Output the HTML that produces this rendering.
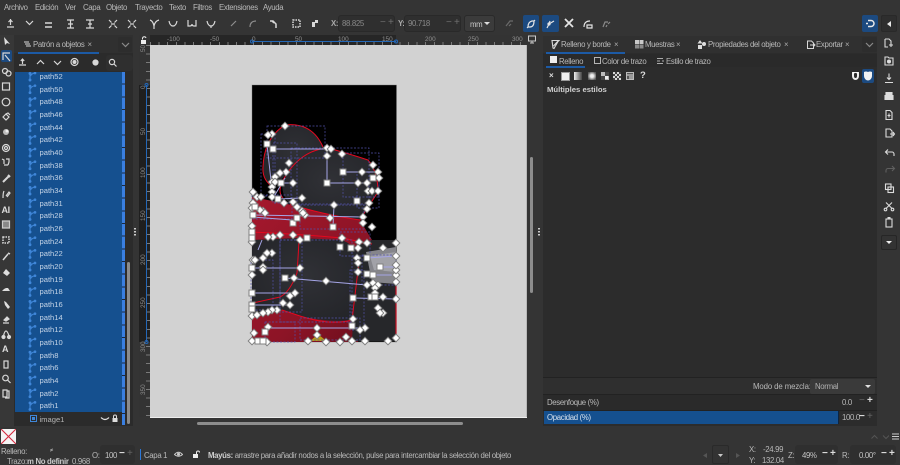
<!DOCTYPE html>
<html lang="es"><head><meta charset="utf-8"><title>Inkscape</title>
<style>
html,body{margin:0;padding:0;background:#343434}
#r{position:relative;width:900px;height:465px;overflow:hidden;background:#343434;font-family:"Liberation Sans",sans-serif;font-size:7.8px;letter-spacing:-.33px;color:#b9b9b9}
#r div,#r span,#r svg{position:absolute}
.t{white-space:nowrap;line-height:9px}
.b{font-weight:bold}
.row{left:39.5px;color:#c3d3e6;font-size:7.6px;letter-spacing:0;white-space:nowrap;line-height:9px}
.lb{color:#8f8f8f;font-size:6.4px;letter-spacing:0;white-space:nowrap;line-height:7px}
.v{transform:rotate(-90deg);transform-origin:0 0}
svg.i{overflow:visible;fill:none;stroke:#d8d8d8;stroke-width:1.2}
</style></head><body><div id="r">

<!-- menu -->
<span class="t" style="left:4px;top:3px">Archivo</span>
<span class="t" style="left:35px;top:3px">Edición</span>
<span class="t" style="left:65px;top:3px">Ver</span>
<span class="t" style="left:83px;top:3px">Capa</span>
<span class="t" style="left:106px;top:3px">Objeto</span>
<span class="t" style="left:135px;top:3px">Trayecto</span>
<span class="t" style="left:169px;top:3px">Texto</span>
<span class="t" style="left:193px;top:3px">Filtros</span>
<span class="t" style="left:219px;top:3px">Extensiones</span>
<span class="t" style="left:263px;top:3px">Ayuda</span>

<!-- toolbar icons -->
<svg class="i" style="left:0;top:14px" width="320" height="20" viewBox="0 0 320 20">
<path d="M7 13h7M10.500 5v6M8.500 8l2-2 2 2"/>
<path d="M26 7l3.500 3.500L33 7"/>
<path d="M45 9h7M45 13h7" stroke-width="1.500"/>
<path d="M67 6h7M70.500 6v8M67 14h7M68 10h5"/>
<path d="M86 6h8M90 6v8M86 14h8M88 10h4"/>
<path d="M109 6l2.500 2.500M117 6l-2.500 2.500M109 14l2.500-2.500M117 14l-2.500-2.500M111 10h4"/>
<path d="M128 6l2.500 2.500M136 6l-2.500 2.500M128 14l2.500-2.500M136 14l-2.500-2.500M130 10h4"/>
<path d="M150 6q3 1 4 6 1-5 5-6M154 12v3"/>
<path d="M169 7q1 5 4 5t4-5"/>
<path d="M188 6v6h2q2 0 2-2 0 2 2 2h2V6"/>
<path d="M207 7q1 5 4 5t4-5M211 12v2"/>
<path d="M231 12l5-5" stroke="#8d8d8d"/>
<path d="M250 13q0-6 6-6" stroke="#8d8d8d"/>
<path d="M270 7h3l3 3v4M272 7l2 2" stroke-width="1.500"/>
<path d="M293 6h7v7h-7z" stroke-dasharray="1.500 1" stroke-width="1.500"/>
<path d="M312 8h3v5h-3zM315 6h3v3h-3z" fill="#d8d8d8" stroke="none"/>
</svg>
<span class="t" style="left:331px;top:19px;font-weight:bold;color:#aaa">X:</span>
<div style="left:338px;top:15px;width:57px;height:17px;background:#2f2f2f;border:1px solid #292929;border-radius:3px;box-sizing:border-box"></div>
<span class="t" style="left:342px;top:19px;color:#8a8a8a">88.825</span>
<span class="t" style="left:380px;top:18px;color:#6f6f6f;font-size:10px">−</span><span class="t" style="left:388px;top:18px;color:#6f6f6f;font-size:10px">+</span>
<span class="t" style="left:398px;top:19px;font-weight:bold;color:#aaa">Y:</span>
<div style="left:404px;top:15px;width:57px;height:17px;background:#2f2f2f;border:1px solid #292929;border-radius:3px;box-sizing:border-box"></div>
<span class="t" style="left:408px;top:19px;color:#8a8a8a">90.718</span>
<span class="t" style="left:446px;top:18px;color:#6f6f6f;font-size:10px">−</span><span class="t" style="left:454px;top:18px;color:#6f6f6f;font-size:10px">+</span>
<div style="left:464px;top:15px;width:31px;height:17px;background:#3b3b3b;border:1px solid #2a2a2a;border-radius:3px;box-sizing:border-box"></div>
<span class="t" style="left:470px;top:20px;color:#c8c8c8">mm</span>
<svg style="left:484px;top:22px" width="6" height="4"><path d="M0 0h6L3 3z" fill="#ddd"/></svg>
<svg class="i" style="left:500px;top:14px;stroke:#6a6a6a" width="400" height="20">
<path d="M6 12l4-5h3M9 12l2-2"/>
</svg>
<div style="left:523px;top:15px;width:16px;height:17px;background:#1c4a80;border-radius:2px"></div>
<div style="left:542px;top:15px;width:17px;height:17px;background:#1c4a80;border-radius:2px"></div>
<svg class="i" style="left:500px;top:14px;stroke:#e4e4e4" width="400" height="20">
<path d="M28 13q0-5 4-6h2q0 6-4 6zM27 14l1-1M35 6l-1 1" />
<path d="M47 14l2-4 1-3M49 10l5-3" />
<circle cx="49" cy="10" r="1" fill="#e4e4e4"/>
<path d="M65 5l8 8M73 5l-8 8" stroke-width="1.800"/>
<path d="M84 13q0-6 6-6M87 11h5v3h-5z"/>
<path d="M103 13l2-5h3M106 13l1-2M108 10l2-2" stroke="#8a8a8a"/>
</svg>
<div style="left:862px;top:15px;width:16px;height:17px;background:#1c4a80;border-radius:2px"></div>
<svg class="i" style="left:862px;top:15px;stroke:#e8e8e8;stroke-width:1.500" width="16" height="17"><path d="M6 5.500h3a3 3 0 0 1 0 6H6M4 8.500h2"/></svg>
<div style="left:881px;top:15px;width:16px;height:17px;background:#2e2e2e;border:1px solid #292929;border-radius:2px;box-sizing:border-box"></div>
<svg style="left:887px;top:21px" width="4" height="6"><path d="M4 0v6L0 3z" fill="#e8e8e8"/></svg>

<!-- left tools -->
<div style="left:0;top:35px;width:14px;height:392px;background:#373737"></div>
<div style="left:1px;top:50px;width:11px;height:12px;background:#1c4a80;border-radius:2px"></div>
<svg class="i" style="left:0;top:35px" width="14" height="392" viewBox="0 0 14 392">
<path d="M4 2l1 8 2-2 3 1z" fill="#ddd" stroke="none"/>
<path d="M3 25v-7h7M5 20l5 6" />
<circle cx="5" cy="36" r="2.500"/><circle cx="8.500" cy="38.500" r="2.500"/>
<rect x="2.500" y="48" width="7" height="7"/>
<circle cx="6" cy="67" r="3.800"/>
<path d="M3 82l3-3 3 3-3 3zM6 79l2-1 2 2" />
<circle cx="6" cy="97" r="3" fill="#bbb" stroke="none"/><circle cx="7" cy="96" r="1.500" fill="#eee" stroke="none"/>
<circle cx="6" cy="113" r="3.500"/><circle cx="6" cy="113" r="1.500"/>
<path d="M2 124l2 1v4M4 130l4 0M6 124h3v3l-1 3" />
<path d="M3 147l6-6M8 140l2 2" stroke-width="2"/>
<path d="M3 163q0-5 1-7M6 161l3-4 1 1-3 4" />
<text x="1.500" y="178" font-size="9" font-weight="bold" fill="#dcdcdc" stroke="none" font-family="Liberation Sans">AI</text>
<path d="M2.500 186h7v7h-7z" fill="#888" stroke="#ccc"/>
<path d="M3 202h6v6H3z" stroke-dasharray="1.500 1" stroke-width="1.500"/>
<path d="M3 225l5-6M8 218l2 1" stroke-width="1.500"/>
<path d="M3 238l3-4 4 4-3 3z" fill="#ddd" stroke="none"/>
<path d="M2 256h8l-2-3h-2l-2 1z" fill="#ddd" stroke="none"/>
<path d="M4 266l2 1 4 5-2 2-3-4z" fill="#ddd" stroke="none"/>
<path d="M3 288h6M4 285l3-3 2 2-3 2z" fill="#ddd"/>
<circle cx="3.500" cy="302" r="1.500" fill="#ddd"/><circle cx="9" cy="302" r="1.500" fill="#ddd"/><path d="M3.500 301q1-5 2.500-5t3 5"/>
<text x="2" y="317" font-size="9" font-weight="bold" fill="#dcdcdc" stroke="none" font-family="Liberation Sans">A</text>
<rect x="4" y="326" width="4" height="7" />
<circle cx="5.500" cy="343" r="2.800"/><path d="M7.500 345l3 3"/>
<path d="M3 355h4v7H3zM7 356h2v7H5" />
</svg>

<!-- layers panel -->
<div style="left:14px;top:35px;width:119px;height:391px;background:#2b2b2b"></div>
<div style="left:14px;top:35px;width:119px;height:18px;background:#303030"></div>
<div style="left:18px;top:52px;width:81px;height:1.500px;background:#1c5aa5"></div>
<svg class="i" style="left:23px;top:40px;stroke-width:1" width="10" height="9"><path d="M1 2h5M2 4h5M3 6h5"/></svg>
<span class="t" style="left:33px;top:40px">Patrón a objetos</span>
<span class="t" style="left:87.500px;top:40px;color:#aaa">×</span>
<div style="left:118px;top:37px;width:14px;height:15px;background:#2d2d2d;border-radius:2px"></div>
<svg class="i" style="left:121px;top:42px;stroke:#8a8a8a" width="9" height="6"><path d="M1 1l3.500 3.500L8 1"/></svg>
<svg class="i" style="left:14px;top:54px;stroke:#d8d8d8" width="119" height="18" viewBox="0 0 119 18">
<path d="M5 11h7M8.500 5v5M6.800 7l1.700-2 1.700 2"/>
<path d="M23 10l3.500-3.500L30 10"/>
<path d="M40 7l3.500 3.500L47 7"/>
<circle cx="60.500" cy="8" r="3.500"/><circle cx="60.500" cy="8" r="1.400" fill="#d8d8d8"/>
<circle cx="81.500" cy="8.500" r="2.500" fill="#d8d8d8"/>
</svg>
<div style="left:106px;top:55px;width:27px;height:16px;background:#2f2f2f;border-radius:3px"></div>
<svg class="i" style="left:108px;top:58px" width="10" height="10"><circle cx="4" cy="4" r="2.600"/><path d="M6 6l2.500 2.500"/></svg>

<div style="left:15px;top:72px;width:106.500px;height:340px;background:#15508f"></div>
<div style="left:122px;top:72px;width:2.500px;height:353px;background:repeating-linear-gradient(#3a7fe0 0 11.670px,#1b2a3f 11.670px 12.670px)"></div>
<div style="left:127px;top:262px;width:3px;height:162px;background:#8b8b8b;border-radius:2px"></div>

<svg width="12" height="345" viewBox="0 0 12 345" style="left:28px;top:72px;stroke:#3f86d8;fill:none;stroke-width:1.100">
<defs><g id="pi"><path d="M2 1.500v6M2.500 4q1.200-2.500 4-2.800"/><circle cx="2" cy="1.500" r=".9" fill="#3f86d8"/><circle cx="7" cy="1" r=".8" fill="#3f86d8"/><circle cx="2" cy="8" r=".9" fill="#3f86d8"/></g></defs>
<use href="#pi" y="0"/><use href="#pi" y="12.670"/><use href="#pi" y="25.340"/><use href="#pi" y="38"/><use href="#pi" y="50.700"/><use href="#pi" y="63.400"/><use href="#pi" y="76"/><use href="#pi" y="88.700"/><use href="#pi" y="101.400"/><use href="#pi" y="114"/><use href="#pi" y="126.700"/><use href="#pi" y="139.400"/><use href="#pi" y="152"/><use href="#pi" y="164.700"/><use href="#pi" y="177.400"/><use href="#pi" y="190"/><use href="#pi" y="202.700"/><use href="#pi" y="215.400"/><use href="#pi" y="228"/><use href="#pi" y="240.700"/><use href="#pi" y="253.400"/><use href="#pi" y="266"/><use href="#pi" y="278.700"/><use href="#pi" y="291.400"/><use href="#pi" y="304"/><use href="#pi" y="316.700"/><use href="#pi" y="329.400"/>
</svg>

<span class="row" style="top:72px">path52</span>
<span class="row" style="top:84.700px">path50</span>
<span class="row" style="top:97.300px">path48</span>
<span class="row" style="top:110px">path46</span>
<span class="row" style="top:122.700px">path44</span>
<span class="row" style="top:135.400px">path42</span>
<span class="row" style="top:148px">path40</span>
<span class="row" style="top:160.700px">path38</span>
<span class="row" style="top:173.400px">path36</span>
<span class="row" style="top:186px">path34</span>
<span class="row" style="top:198.700px">path31</span>
<span class="row" style="top:211.400px">path28</span>
<span class="row" style="top:224px">path26</span>
<span class="row" style="top:236.700px">path24</span>
<span class="row" style="top:249.400px">path22</span>
<span class="row" style="top:262px">path20</span>
<span class="row" style="top:274.700px">path19</span>
<span class="row" style="top:287.400px">path18</span>
<span class="row" style="top:300px">path16</span>
<span class="row" style="top:312.700px">path14</span>
<span class="row" style="top:325.400px">path12</span>
<span class="row" style="top:338px">path10</span>
<span class="row" style="top:350.700px">path8</span>
<span class="row" style="top:363.400px">path6</span>
<span class="row" style="top:376px">path4</span>
<span class="row" style="top:388.700px">path2</span>
<span class="row" style="top:401.400px">path1</span>
<svg style="left:29.500px;top:415px" width="7" height="7"><rect x=".5" y=".5" width="6" height="6" fill="none" stroke="#3f86d8"/><rect x="2" y="2" width="3" height="3" fill="#3f86d8"/></svg>
<span class="row" style="top:414.500px;color:#b5b5b5">image1</span>
<svg class="i" style="left:100px;top:416px;stroke:#ddd" width="10" height="6"><path d="M1 1.500q4 4 8 0"/></svg>
<svg style="left:112px;top:414px" width="6" height="9"><path d="M1.500 4V2.500a1.500 1.500 0 0 1 3 0V4" fill="none" stroke="#ddd"/><rect x="0.500" y="4" width="5" height="4" fill="#ddd"/></svg>

<!-- handle dots -->
<svg style="left:134px;top:228px" width="3" height="8"><g fill="#ccc"><rect y="0" width="2" height="1.500"/><rect y="3" width="2" height="1.500"/><rect y="6" width="2" height="1.500"/></g></svg>
<svg style="left:538px;top:228px" width="3" height="8"><g fill="#ccc"><rect y="0" width="2" height="1.500"/><rect y="3" width="2" height="1.500"/><rect y="6" width="2" height="1.500"/></g></svg>

<!-- rulers -->
<div style="left:139px;top:35px;width:390px;height:10px;background:#333"></div>
<div style="left:150px;top:35px;width:246px;height:10px;background:#262626"></div>
<div style="left:150px;top:41.500px;width:376px;height:3.500px;background:repeating-linear-gradient(90deg,#7a7a7a 0 1px,transparent 1px 8.600px)"></div>
<div style="left:139px;top:45px;width:11px;height:372px;background:#333"></div>
<div style="left:139px;top:85px;width:11px;height:257px;background:#1f1f1f"></div>
<div style="left:146px;top:45px;width:4px;height:372px;background:repeating-linear-gradient(#7a7a7a 0 1px,transparent 1px 8.600px)"></div>
<div style="left:252px;top:41px;width:144px;height:1.200px;background:#2468b8"></div>
<div style="left:145.500px;top:85px;width:1.200px;height:257px;background:#2468b8"></div>
<svg style="left:250px;top:39px" width="149" height="6"><circle cx="2" cy="2.500" r="1.500" fill="none" stroke="#2468b8"/><circle cx="146" cy="2.500" r="1.500" fill="none" stroke="#2468b8"/></svg>
<svg style="left:143.500px;top:83px" width="5" height="262"><circle cx="2.500" cy="2" r="1.500" fill="none" stroke="#2468b8"/><circle cx="2.500" cy="259" r="1.500" fill="none" stroke="#2468b8"/></svg>
<span class="lb" style="left:167px;top:36px">-100</span>
<span class="lb" style="left:210px;top:36px">-50</span>
<span class="lb" style="left:252px;top:36px">0</span>
<span class="lb" style="left:295px;top:36px">50</span>
<span class="lb" style="left:338px;top:36px">100</span>
<span class="lb" style="left:382px;top:36px">150</span>
<span class="lb" style="left:425px;top:36px">200</span>
<span class="lb" style="left:468px;top:36px">250</span>
<span class="lb" style="left:512px;top:36px">300</span>
<span class="lb v" style="left:140px;top:52px">50</span>
<span class="lb v" style="left:140px;top:89px">0</span>
<span class="lb v" style="left:140px;top:135px">50</span>
<span class="lb v" style="left:140px;top:178px">100</span>
<span class="lb v" style="left:140px;top:221px">150</span>
<span class="lb v" style="left:140px;top:265px">200</span>
<span class="lb v" style="left:140px;top:308px">250</span>
<span class="lb v" style="left:140px;top:352px">300</span>
<span class="lb v" style="left:140px;top:395px">350</span>
<svg style="left:140px;top:36px" width="9" height="9"><path d="M2.500 3.500V2.500a1.800 1.800 0 0 1 3.500-.5" fill="none" stroke="#eee"/><rect x="1" y="4" width="5" height="4" fill="#eee"/></svg>
<svg class="i" style="left:527px;top:35px;stroke:#ccc;stroke-width:1" width="11" height="9"><rect x="1.500" y="1" width="7" height="5"/><path d="M5 6v2M3 8h4"/></svg>

<!-- canvas -->
<div style="left:150px;top:45px;width:376px;height:372px;background:#d2d2d2"></div>
<div style="left:526px;top:45px;width:1px;height:372px;background:#b8b8b8"></div>
<div style="left:150px;top:417px;width:377px;height:1px;background:#eee"></div>
<div style="left:197px;top:421.500px;width:266px;height:3px;background:#8d8d8d;border-radius:2px"></div>
<div style="left:530px;top:157px;width:3px;height:136px;background:#8d8d8d;border-radius:2px"></div>

<svg style="left:0;top:0" width="900" height="465" viewBox="0 0 900 465">
<defs>
<radialGradient id="g1" cx=".5" cy=".45" r=".75"><stop offset="0" stop-color="#303136"/><stop offset="1" stop-color="#222327"/></radialGradient>
<linearGradient id="g2" x1="0" y1="0" x2="1" y2="1"><stop offset="0" stop-color="#a5182d"/><stop offset=".6" stop-color="#8d1426"/><stop offset="1" stop-color="#6a0e1c"/></linearGradient>
<marker id="d" markerUnits="userSpaceOnUse" markerWidth="10" markerHeight="10" refX="5" refY="5" overflow="visible"><path d="M5 1.200L8.800 5 5 8.800 1.200 5z" fill="#fff" stroke="#808080" stroke-width="1"/></marker>
<marker id="s" markerUnits="userSpaceOnUse" markerWidth="8" markerHeight="8" refX="4" refY="4" overflow="visible"><rect x="1" y="1" width="6" height="6" fill="#fff" stroke="#808080" stroke-width="1"/></marker>
</defs>
<rect x="252" y="85" width="144.500" height="257" fill="#000"/>
<rect x="252" y="85" width="144.500" height="257" fill="none" stroke="#777" stroke-width=".4"/>
<!-- red body -->
<path d="M252 197L283 203L360 220L372 240L358 250V342H252Z" fill="url(#g2)"/>
<!-- right dark -->
<path d="M357 246L372 240L396 240V341L352 341Z" fill="#26272a"/>
<path d="M366 252L396 247V284L372 282Z" fill="#85858b"/>
<path d="M370 256L396 252V272L374 270Z" fill="#a2a2a8"/>
<!-- centre dark -->
<path d="M252 240L298 238L342 240Q352 244 357 252L358 270L352 320Q330 323 300 316L282 310L262 312L252 320Z" fill="url(#g1)"/>
<path d="M310 341Q316 336 318 335 321 336 326 341Z" fill="#b89a16"/>
<!-- dark upper shapes -->
<path d="M263 167Q264 138 285 125Q312 122 323 147L328 150Q300 152 283 178L273 187Q262 180 263 167Z" fill="url(#g1)"/>
<path d="M283 180Q300 150 328 148Q350 154 368 160Q378 172 378 192L368 207L360 220Q320 214 290 204Q280 194 283 180Z" fill="url(#g1)"/>
<!-- red outlines -->
<g fill="none" stroke="#e5081f" stroke-width="1">
<path d="M273 187Q262 180 263 167Q264 138 285 125Q312 122 323 147"/>
<path d="M283 198Q277 192 283 180Q300 150 328 148Q350 154 368 160Q378 172 378 192L368 207L360 220Q320 214 290 204"/>
<path d="M252 232Q300 234 342 238L372 244"/>
<path d="M299 240Q298 260 297 273 290 292 280 297L253 303"/>
<path d="M359 262L352 320Q330 326 300 316L282 310"/>
<path d="M252 320Q262 311 280 312"/>
<path d="M396 285V340"/>
</g>
<!-- dashed bboxes -->
<g fill="none" stroke="#5252a8" stroke-width=".7" stroke-dasharray="2 1.500">
<rect x="267" y="126" width="58" height="32"/>
<rect x="261" y="134" width="14" height="62"/>
<rect x="273" y="143" width="24" height="60"/>
<rect x="291" y="148" width="78" height="56"/>
<rect x="343" y="153" width="36" height="44"/>
<rect x="357" y="172" width="22" height="36"/>
<rect x="300" y="205" width="64" height="24"/>
<rect x="252" y="195" width="40" height="24"/>
<rect x="280" y="240" width="72" height="82"/>
<rect x="251" y="260" width="22" height="50"/>
<rect x="280" y="240" width="22" height="72"/>
<rect x="350" y="270" width="14" height="60"/>
<rect x="340" y="232" width="30" height="24"/>
<rect x="300" y="318" width="60" height="22"/>
<rect x="265" y="322" width="30" height="20"/>
<rect x="362" y="255" width="34" height="30"/>
</g>
<!-- handle lines -->
<g stroke="#a5a5e6" stroke-width="1" fill="none">
<path d="M273 149H327M327 156V183H367M343 172H378M267 144L272 190M281 183H293M278 199L302 198M253 215L363 217M334 205L333 227M300 268H252M285 278L367 285M252 293H295M252 305H290M353 298L396 299M265 328H365M367 258L396 256M373 275H396M380 267H396M292 220L252 217M317 328V335M285 178L272 200M258 250L262 240"/>
</g>
<!-- nodes -->
<polyline fill="none" stroke="none" marker-start="url(#d)" marker-mid="url(#d)" marker-end="url(#d)" points="285,126 272,134 268,135 327,148 331,149 327,156 342,154 373,165 378,172 362,172 289,163 286,172 280,173 275,177 272,182 275,182 293,183 272,187 272,192 272,197 284,203 302,198 293,202 297,207 302,211 305,215 334,205 330,218 363,217 363,223 372,227 367,209 369,203 368,191 372,191 378,191 379,178 367,183 358,183 253,192 257,197 261,197 253,203 252,208 263,211 260,210 252,226 265,213 303,213 253,260 300,268 252,275 294,278 326,281 358,272 396,256 396,243 383,248 367,243 359,242 342,238 295,293 290,296 283,303 290,305 277,310 272,310 268,312 252,316 257,315 263,313 268,327 254,333 252,341 267,342 317,328 317,335 308,341 326,342 340,342 346,337 352,341 365,341 365,328 353,319 360,330 388,341 396,338 396,299 383,297 367,285 373,283 378,285 396,282 396,275 396,270 396,265 375,288 375,293 378,308 383,313 380,313 358,248 357,258 358,263 293,235 280,235 273,237 268,237 300,240 272,253 267,253 263,258 255,260 263,267 263,270 252,242"/>
<polyline fill="none" stroke="none" marker-start="url(#s)" marker-mid="url(#s)" marker-end="url(#s)" points="267,144 273,149 327,183 343,172 373,178 357,201 281,183 278,199 253,215 293,223 333,227 297,218 255,207 285,278 252,293 252,305 252,268 252,232 252,238 307,238 340,247 351,248 353,298 367,258 380,267 367,274 373,275 371,297 375,297 352,326 265,332 258,341 263,341 252,309"/>
</svg>

<!-- right panel -->
<div style="left:543px;top:36px;width:334px;height:390px;background:#2c2c2c"></div>
<div style="left:543px;top:36px;width:334px;height:17px;background:#303030"></div>
<div style="left:546px;top:52px;width:79px;height:1.500px;background:#1c5aa5"></div>
<div style="left:543px;top:54px;width:334px;height:13px;background:#2a2a2a"></div>
<div style="left:546px;top:66px;width:39px;height:1.500px;background:#1c5aa5"></div>
<div style="left:543px;top:377px;width:334px;height:1px;background:#222"></div>
<div style="left:543px;top:378px;width:334px;height:16px;background:#2f2f2f"></div>
<div style="left:543px;top:394px;width:334px;height:1px;background:#222"></div>
<div style="left:543px;top:395px;width:334px;height:15px;background:#2a2a2a"></div>
<div style="left:543px;top:410px;width:334px;height:1px;background:#222"></div>
<div style="left:544px;top:411px;width:294px;height:13px;background:#15508f;border-right:1px solid #0d2440"></div>

<svg class="i" style="left:551px;top:39px;stroke-width:1.100" width="10" height="11"><path d="M1 1.500h7l-1 1L3 9.500 2 9zM2.500 7L7 2" /></svg>
<span class="t" style="left:561px;top:40px">Relleno y borde</span>
<span class="t" style="left:614px;top:40px;color:#aaa">×</span>
<svg style="left:635px;top:40px" width="9" height="9"><g fill="#c9c9c9"><rect width="4" height="4"/><rect x="4.500" width="4" height="4"/><rect y="4.500" width="4" height="4" fill="#8a8a8a"/><rect x="4.500" y="4.500" width="4" height="4" fill="#8a8a8a"/></g></svg>
<span class="t" style="left:645px;top:40px">Muestras</span>
<span class="t" style="left:676px;top:40px;color:#aaa">×</span>
<svg style="left:697px;top:40px" width="10" height="10"><path d="M3 0l2.500 3.500h-5z" fill="#ddd"/><rect x="1" y="5" width="4" height="4" fill="#ddd"/><circle cx="7" cy="4" r="2" fill="#ddd"/></svg>
<span class="t" style="left:708px;top:40px">Propiedades del objeto</span>
<span class="t" style="left:784px;top:40px;color:#aaa">×</span>
<svg class="i" style="left:806px;top:40px;stroke-width:1" width="10" height="10"><path d="M1.500 1h4l2 2v5.500h-6zM4 5h5M7.500 3.500L9 5 7.500 6.500"/></svg>
<span class="t" style="left:816px;top:40px">Exportar</span>
<span class="t" style="left:845px;top:40px;color:#aaa">×</span>
<div style="left:862px;top:37px;width:15px;height:15px;background:#2d2d2d;border-radius:2px"></div>
<svg class="i" style="left:865px;top:42px;stroke:#8a8a8a" width="9" height="6"><path d="M1 1l3.500 3.500L8 1"/></svg>

<div style="left:550px;top:56px;width:7px;height:7px;background:#eee"></div>
<span class="t" style="left:559px;top:57px">Relleno</span>
<div style="left:594px;top:56.500px;width:5px;height:5px;border:1px solid #b5b5b5"></div>
<span class="t" style="left:602px;top:57px">Color de trazo</span>
<svg class="i" style="left:657px;top:57px;stroke-width:.8" width="8" height="8"><path d="M0 1.500h6M0 4h3M5 4h2M0 6.500h6"/></svg>
<span class="t" style="left:666px;top:57px">Estilo de trazo</span>

<span class="t b" style="left:549px;top:71px;color:#ddd;font-size:8px">×</span>
<div style="left:561px;top:72px;width:7px;height:7px;background:#eee;border:.5px solid #999"></div>
<div style="left:574px;top:72px;width:8px;height:8px;background:linear-gradient(90deg,#eee,#444)"></div>
<div style="left:588px;top:72px;width:8px;height:8px;background:radial-gradient(#eee 25%,#555 80%)"></div>
<svg style="left:601px;top:72px" width="8" height="8"><rect width="8" height="8" fill="#bbb"/><rect x="4" width="4" height="4" fill="#444"/><rect y="4" x="0" width="4" height="4" fill="#444"/><rect x="4" y="4" width="3" height="3" fill="#eee"/></svg>
<svg style="left:613px;top:72px" width="8" height="8"><rect width="8" height="8" fill="#444"/><g fill="#d8d8d8"><rect width="2" height="2"/><rect x="4" width="2" height="2"/><rect x="2" y="2" width="2" height="2"/><rect x="6" y="2" width="2" height="2"/><rect y="4" width="2" height="2"/><rect x="4" y="4" width="2" height="2"/><rect x="2" y="6" width="2" height="2"/><rect x="6" y="6" width="2" height="2"/></g></svg>
<svg style="left:626px;top:72px" width="8" height="8"><rect x=".5" y=".5" width="7" height="7" fill="#555" stroke="#bbb"/><path d="M1 3h6" stroke="#ddd"/><rect x="3" y="4" width="4" height="3" fill="#999"/></svg>
<span class="t b" style="left:640px;top:71px;color:#ddd;font-size:9.500px">?</span>
<svg style="left:851px;top:71px" width="9" height="10"><path d="M1 1h7v4a3.500 4 0 0 1-7 0z" fill="#eee"/><path d="M3 2h3v3a1.500 2 0 0 1-3 0z" fill="#2c2c2c"/><path d="M2 1h1.500v1.500H2zM5.500 1H7v1.500H5.500z" fill="#fff"/></svg>
<div style="left:862px;top:69px;width:12px;height:14px;background:#1c4a80;border-radius:2px"></div>
<svg style="left:864px;top:71px" width="8" height="10"><path d="M0 1q2-1 4 0 2-1 4 0v4a4 4.500 0 0 1-8 0z" fill="#f2f2f2"/></svg>

<span class="t b" style="left:547px;top:85px;color:#d2d2d2;font-size:7.700px;letter-spacing:0">Múltiples estilos</span>

<span class="t" style="left:753px;top:382px;letter-spacing:-.1px">Modo de mezcla:</span>
<div style="left:810px;top:379px;width:65px;height:15px;background:#3a3a3a;border-radius:2px"></div>
<span class="t" style="left:815px;top:382px;color:#b0b0b0">Normal</span>
<svg style="left:865px;top:385px" width="6" height="4"><path d="M0 0h6L3 3z" fill="#e0e0e0"/></svg>
<span class="t" style="left:547px;top:398px">Desenfoque (%)</span>
<span class="t" style="left:842px;top:398px">0.0</span>
<span class="t" style="left:859px;top:396px;color:#666;font-size:10px">−</span><span class="t b" style="left:867px;top:396px;color:#ddd;font-size:10px">+</span>
<span class="t" style="left:547px;top:413px;color:#d8e2ee">Opacidad (%)</span>
<span class="t" style="left:842px;top:413px">100.0</span>
<span class="t b" style="left:859px;top:412px;color:#ddd;font-size:10px">−</span><span class="t" style="left:867px;top:412px;color:#666;font-size:10px">+</span>

<!-- right command bar -->
<svg class="i" style="left:878px;top:36px;stroke:#dcdcdc;stroke-width:1.100" width="22" height="220" viewBox="0 0 22 220">
<path d="M7 3h4l2 2v2M7 3v8h3M13 7v4M11 9h4"/>
<g transform="translate(0,3)"><path d="M7 18h3l1 1h4v7H7z" /><circle cx="11" cy="22.500" r="1.500" fill="#dcdcdc"/></g>
<path transform="translate(0,6.500)" d="M7 40h8M11 31v6M9 35l2 2 2-2" />
<path transform="translate(0,9.500)" d="M8 50v-3h6v3M7 50h8v4H7z" fill="#dcdcdc"/>
<path transform="translate(0,8.500)" d="M8 66h4l2 2v7H8zM11 69v4M9.500 71h3"/>
<path transform="translate(0,10)" d="M8 83h4l2 2v6H8zM12 88h4M15 86l1.500 2-1.500 2"/>
<path transform="translate(0,13)" d="M8 103h6a2 2 0 0 1 2 2v2M10 100.500L7.500 103l2.500 2.500"/>
<path transform="translate(0,13.500)" d="M8 123v-2a2 2 0 0 1 2-2h6M14 116.500l2.500 2.500-2.500 2.500" stroke="#5f5f5f"/>
<g transform="translate(0,14)"><rect x="7.500" y="134" width="5.500" height="5.500"/><rect x="10" y="137" width="5.500" height="5.500"/></g>
<g transform="translate(0,14.500)"><path d="M8 152l6 6M14 152l-6 6" /><circle cx="7.500" cy="159" r="1.300"/><circle cx="14.500" cy="159" r="1.300"/></g>
<g transform="translate(0,12)"><rect x="8" y="171" width="6" height="8"/><path d="M9.500 170h3" stroke-width="2"/></g>
</svg>
<div style="left:881px;top:235px;width:16px;height:15px;background:#333;border:1px solid #262626;border-radius:2px;box-sizing:border-box"></div>
<svg style="left:886px;top:241px" width="6" height="4"><path d="M0 0h6L3 3z" fill="#eee"/></svg>

<!-- status bar -->
<svg style="left:1px;top:429px" width="15" height="15"><rect width="15" height="15" fill="#f4f4f4"/><path d="M0 0L15 15M15 0L0 15" stroke="#d42a3f" stroke-width="1.100"/></svg>
<span class="t" style="left:1px;top:447px">Relleno:</span>
<span class="t" style="left:50px;top:447px;font-size:6px">≠</span>
<span class="t" style="left:7px;top:457px">Trazo:</span>
<span class="t b" style="left:27px;top:457px;color:#c8c8c8">m No definir</span>
<span class="t" style="left:72px;top:457px">0.968</span>
<span class="t" style="left:92px;top:451px">O:</span>
<div style="left:100px;top:445px;width:35px;height:19px;background:#2f2f2f;border-radius:3px"></div>
<span class="t" style="left:105px;top:451px;color:#c5c5c5">100</span>
<span class="t b" style="left:119px;top:449px;color:#ddd;font-size:10px">−</span><span class="t" style="left:127px;top:449px;color:#666;font-size:10px">+</span>
<div style="left:140px;top:449px;width:1.200px;height:11px;background:#2c78d8"></div>
<span class="t" style="left:144px;top:451px">Capa 1</span>
<svg style="left:174px;top:451px" width="9" height="7"><path d="M.5 3.500Q4.500-1 8.500 3.500 4.500 7 .5 3.500z" fill="none" stroke="#ccc"/><circle cx="4.500" cy="3.200" r="1.500" fill="#ccc"/></svg>
<svg style="left:192px;top:450px" width="9" height="9"><path d="M4.500 4V2.500a1.500 1.500 0 0 1 3 0" fill="none" stroke="#eee"/><rect x="1" y="4" width="5" height="4" fill="#eee"/></svg>
<span class="t" style="left:208px;top:451px"><b style="color:#d0d0d0">Mayús:</b> arrastre para añadir nodos a la selección, pulse para intercambiar la selección del objeto</span>

<svg style="left:871px;top:434px" width="18" height="6"><path d="M.5 4.500l3-3 3 3M12 1.500l3 3 3-3" fill="none" stroke="#555"/></svg>
<svg style="left:892px;top:433px" width="7" height="7"><path d="M0 1h7M0 3.500h7M0 6h7" stroke="#ccc" stroke-width="1.100"/></svg>
<svg style="left:703px;top:453px" width="4" height="6"><path d="M4 0v5L0 2.500z" fill="#555"/></svg>
<div style="left:712px;top:445px;width:17px;height:19px;background:#333;border:1px solid #2a2a2a;border-radius:2px;box-sizing:border-box"></div>
<svg style="left:718px;top:454px" width="5" height="3"><path d="M0 0h5L2.500 3z" fill="#c8c8c8"/></svg>
<svg style="left:736px;top:453px" width="4" height="6"><path d="M0 0v5l4-2.500z" fill="#555"/></svg>
<span class="t" style="left:749px;top:445px">X:</span>
<span class="t" style="left:763px;top:445px">-24.99</span>
<span class="t" style="left:749px;top:456px">Y:</span>
<span class="t" style="left:762px;top:456px">132.04</span>
<span class="t" style="left:788px;top:451px">Z:</span>
<div style="left:795px;top:445px;width:43px;height:19px;background:#2f2f2f;border-radius:3px"></div>
<span class="t" style="left:802px;top:451px;color:#c5c5c5">49%</span>
<span class="t b" style="left:822px;top:449px;color:#ddd;font-size:10px">−</span><span class="t b" style="left:830px;top:449px;color:#ddd;font-size:10px">+</span>
<span class="t" style="left:842px;top:451px">R:</span>
<div style="left:850px;top:445px;width:46px;height:19px;background:#2f2f2f;border-radius:3px"></div>
<span class="t" style="left:859px;top:451px;color:#c5c5c5">0.00°</span>
<span class="t b" style="left:881px;top:449px;color:#ddd;font-size:10px">−</span><span class="t b" style="left:889px;top:449px;color:#ddd;font-size:10px">+</span>

</div></body></html>
